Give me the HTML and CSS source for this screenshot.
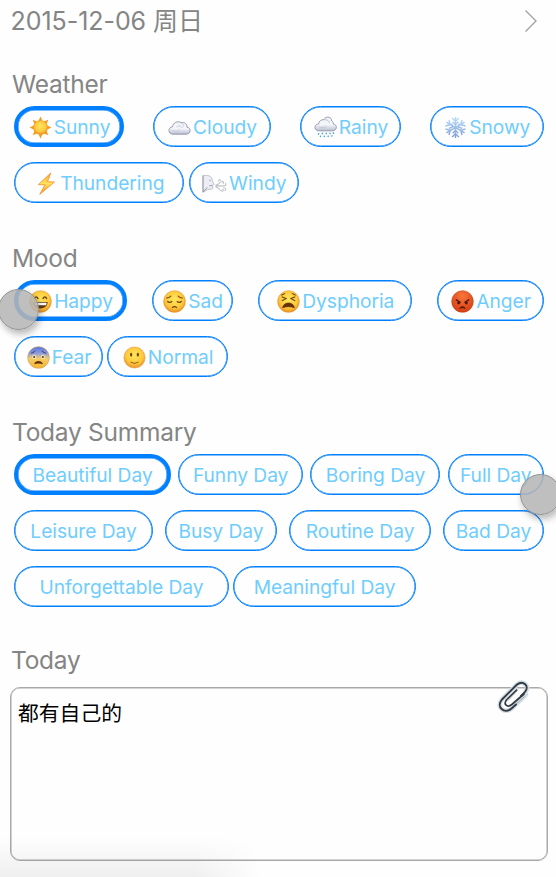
FILE: index.html
```html
<!DOCTYPE html>
<html lang="en">
<head>
<meta charset="utf-8">
<title>Diary</title>
<link rel="stylesheet" href="styles.css">
</head>
<body>
<svg class="defs" width="0" height="0" aria-hidden="true">
  <defs>
    <radialGradient id="face" cx=".5" cy=".4" r=".62"><stop offset="0" stop-color="#ffe75c"/><stop offset=".65" stop-color="#fdc83c"/><stop offset="1" stop-color="#e88a20"/></radialGradient>
    <radialGradient id="red" cx=".5" cy=".25" r=".75"><stop offset="0" stop-color="#f9763c"/><stop offset="1" stop-color="#d63c10"/></radialGradient>
    <linearGradient id="fear" x1="0" y1="0" x2="0" y2="1"><stop offset="0" stop-color="#5573dc"/><stop offset=".3" stop-color="#8b9de0"/><stop offset=".55" stop-color="#f3cc66"/><stop offset="1" stop-color="#f7b52c"/></linearGradient>
    <linearGradient id="cloud" x1="0" y1="0" x2="0" y2="1"><stop offset="0" stop-color="#f1f2f7"/><stop offset=".55" stop-color="#f5f6fa"/><stop offset="1" stop-color="#b8bccf"/></linearGradient>
    <linearGradient id="bolt" x1="0" y1="0" x2="0" y2="1"><stop offset="0" stop-color="#ff9c2e"/><stop offset=".5" stop-color="#ffe45a"/><stop offset="1" stop-color="#f98a24"/></linearGradient>
    <linearGradient id="ice" x1="0" y1="0" x2="0" y2="1"><stop offset="0" stop-color="#b9dcf8"/><stop offset="1" stop-color="#7f9fd8"/></linearGradient>
  </defs>
</svg>
<header class="topbar">
  <span class="date">2015-12-06 <span class="cjk">周日</span></span>
  <svg class="chevron" width="14" height="24" viewBox="0 0 14 24"><path d="M1.5 1.5 12 12 1.5 22.5"/></svg>
</header>
<main>
  <section class="group">
    <h2>Weather</h2>
    <div class="row spread">
      <button class="chip selected sunny"><svg class="emoji" viewBox="0 0 24 24"><path fill="#f79a1c" d="M12 .5 14 5h-4zM12 23.5l2-4.500h-4zM.5 12 5 10v4zM23.500 12 19 10v4zM3.900 3.900l4.600 1.800-2.800 2.800zM20.100 3.900l-1.800 4.600-2.800-2.800zM3.900 20.100l1.800-4.600 2.800 2.800zM20.100 20.100l-4.600-1.800 2.800-2.800z"/><circle cx="12" cy="12" r="7.300" fill="url(#face)" stroke="#ee9a24" stroke-width=".8"/></svg><span>Sunny</span></button>
      <button class="chip cloudy"><svg class="emoji" viewBox="0 0 24 24"><path d="M5.500 19C-.5 19-.3 11.700 4.700 11.300 5 7 10.500 4.500 13.500 7c4-1 6.800 1.500 6.200 4.600 4.800.8 4.500 7-.7 7.400z" fill="url(#cloud)" stroke="#8c90a4" stroke-width=".9"/><path d="M9 11.800c2-2.300 5-1.800 5.600.7M14 7.500c2 .7 2.600 2.200 2.200 3.600M4.500 14.500c3 2 6 1.700 8-.5" fill="none" stroke="#c4c7d5"/></svg><span>Cloudy</span></button>
      <button class="chip rainy"><svg class="emoji" viewBox="0 0 24 24"><path d="M5.500 15.500C-.5 15.500-.3 8.800 4.700 8.300 5 5 8 3.500 10.500 3.800c2-4.500 8.300-2.800 8 1.400 1.500.7 1.800 2 1.600 3.200 4.800.8 4.200 6.800-1.100 7.100z" fill="url(#cloud)" stroke="#8c90a4" stroke-width=".9"/><path d="M11 4c3-.5 5 1 5 3.500M5 11c3 2 6 1.500 8-.5" fill="none" stroke="#bfc3d1"/><path d="m5 18-.5 1.500M9 17.500 8.500 19M13 17.500l-.5 1.500M17 17.500l-.5 1.500M20.500 17l-.5 1.500M7 20.500 6.500 22M11 20.500l-.5 1.500M15 20.500l-.5 1.500M19 20l-.5 1.500" stroke="#4b9de0" stroke-width="1.400"/></svg><span>Rainy</span></button>
      <button class="chip snowy"><svg class="emoji" viewBox="0 0 24 24"><g fill="none" stroke="url(#ice)" stroke-width="1.500"><path d="M12.010 1 12 23M2.500 6.500l19 11M2.500 17.500l19-11"/><path d="m8.500 2 3.500 3.500L15.500 2M8.500 22l3.500-3.500 3.500 3.500M1.500 10.500l5-1.300-1.300-5M22.500 10.500l-5-1.300 1.300-5M1.500 13.500l5 1.300-1.300 5M22.500 13.500l-5 1.300 1.300 5M9 6l3 3 3-3M9 18l3-3 3 3M5 12.800l4-1-1-4M19 12.800l-4-1 1-4"/></g></svg><span>Snowy</span></button>
    </div>
    <div class="row">
      <button class="chip thundering"><svg class="emoji" viewBox="0 0 24 24"><path d="M16.500 1 3.500 13.200l7 .1L5 23.300 20.300 10.400l-7.300-.2z" fill="url(#bolt)" stroke="#f29432" stroke-width=".9"/></svg><span>Thundering</span></button>
      <button class="chip windy"><svg class="emoji wide" viewBox="0 0 26 24"><path d="M1 4c5-1 9.500 0 9.500 4.500L12.500 13l-1.500.8.2 3.700-5.200.8L1 21z" fill="#eceef4" stroke="#b9bbc5" stroke-width=".9"/><path d="M1 3.500V21l4.500-5M7.500 8.500 9 9M7.500 14.500l3-.5" fill="none" stroke="#8d90a0" stroke-width=".9"/><path d="M14 13.500c4 .5 4-3.500 7-3.500 2 0 2 2 .5 2M14 14.500h9c2.500 0 2.500-2.500 1-2.500M14 15.500c4 0 4 4.500 7 4.500 1.500 0 1.500-2 0-2M22 16.500c3-.5 3.500 2.500 1.500 3M17.500 10c-1-2 2-2.500 2-1" fill="none" stroke="#bfc1c8" stroke-width="1.100"/></svg><span>Windy</span></button>
    </div>
  </section>
  <section class="group">
    <h2>Mood</h2>
    <div class="row spread">
      <button class="chip selected happy"><svg class="emoji" viewBox="0 0 24 24"><circle cx="12" cy="12" r="11.300" fill="url(#face)" stroke="#e4922c" stroke-width=".6"/><path d="M5.500 9.500c.6-3 3.400-3 4 0M14.500 9.500c.6-3 3.400-3 4 0" fill="none" stroke="#65390d" stroke-width="1.400"/><path d="M4.500 12.500h15c-.3 9-14.700 9-15 0z" fill="#65390d"/><path d="M5.500 13.300h13l-.7 2.500H6.200z" fill="#fff"/></svg><span>Happy</span></button>
      <button class="chip sad"><svg class="emoji" viewBox="0 0 24 24"><circle cx="12" cy="12" r="11.300" fill="url(#face)" stroke="#e4922c" stroke-width=".6"/><path d="M3.500 8.500c2.500-.2 4-1 5-2.500M20.500 8.500c-2.500-.2-4-1-5-2.500M4.500 11.500c1.300 1.800 3.700 1.800 5 0M14.500 11.500c1.300 1.800 3.700 1.800 5 0M9.500 18.500c1.500-1.300 3.500-1.300 5 0" fill="none" stroke="#75430d" stroke-width="1.300"/></svg><span>Sad</span></button>
      <button class="chip dysphoria"><svg class="emoji" viewBox="0 0 24 24"><circle cx="12" cy="12" r="11.300" fill="url(#face)" stroke="#e4922c" stroke-width=".6"/><path d="M4.500 5.500 8.500 3.500M19.500 5.500l-4-2M5 7l4.500 2L5 11.200M19 7l-4.500 2 4.500 2.200" fill="none" stroke="#6b3c0c" stroke-width="1.100"/><path d="M6 18.500c.5-6.500 11.500-6.500 12 0-3-1.500-9-1.500-12 0z" fill="#65300a" stroke="#65300a" stroke-width=".8"/></svg><span>Dysphoria</span></button>
      <button class="chip anger"><svg class="emoji" viewBox="0 0 24 24"><circle cx="12" cy="12" r="11.300" fill="url(#red)" stroke="#bb4b20" stroke-width=".6"/><path d="m5 10 5 3M19 10l-5 3" stroke="#4b1706" stroke-width="1.400"/><circle cx="8" cy="13.500" r="1.500" fill="#4b1706"/><circle cx="16" cy="13.500" r="1.500" fill="#4b1706"/><path d="M9 19.200c1.300-2.400 4.700-2.400 6 0-1.500-.8-4.500-.8-6 0z" fill="#4b1706" stroke="#4b1706" stroke-width=".7"/></svg><span>Anger</span></button>
    </div>
    <div class="row">
      <button class="chip fear"><svg class="emoji" viewBox="0 0 24 24"><circle cx="12" cy="12" r="11.300" fill="url(#fear)" stroke="#c99a55" stroke-width=".6"/><path d="M4 7.500c2 0 3.500-1 4.500-2.500M20 7.500c-2 0-3.500-1-4.500-2.500" fill="none" stroke="#4a4a78" stroke-width="1.100"/><circle cx="7.500" cy="11.500" r="2.100" fill="#f8edcd"/><circle cx="16.500" cy="11.500" r="2.100" fill="#f8edcd"/><circle cx="7.500" cy="11.500" r="1.100" fill="#5d3512"/><circle cx="16.500" cy="11.500" r="1.100" fill="#5d3512"/><path d="M7.500 19c.7-4.500 8.300-4.500 9 0-2.500-1-6.500-1-9 0z" fill="#65300a"/></svg><span>Fear</span></button>
      <button class="chip normal"><svg class="emoji" viewBox="0 0 24 24"><circle cx="12" cy="12" r="11" fill="url(#face)" stroke="#e4922c" stroke-width=".6"/><ellipse cx="8.500" cy="9" rx="1.200" ry="2" fill="#75430d"/><ellipse cx="15.500" cy="9" rx="1.200" ry="2" fill="#75430d"/><path d="M8 16.500c2.500 1.800 5.500 1.800 8 0" fill="none" stroke="#8a5210" stroke-width="1.100"/></svg><span>Normal</span></button>
    </div>
  </section>
  <section class="group">
    <h2>Today Summary</h2>
    <div class="row spread">
      <button class="chip selected beautiful">Beautiful Day</button>
      <button class="chip funny">Funny Day</button>
      <button class="chip boring">Boring Day</button>
      <button class="chip full">Full Day</button>
    </div>
    <div class="row spread">
      <button class="chip leisure">Leisure Day</button>
      <button class="chip busy">Busy Day</button>
      <button class="chip routine">Routine Day</button>
      <button class="chip bad">Bad Day</button>
    </div>
    <div class="row">
      <button class="chip unforgettable">Unforgettable Day</button>
      <button class="chip meaningful">Meaningful Day</button>
    </div>
  </section>
  <section class="entry">
    <h2>Today</h2>
    <div class="note">都有自己的
      <svg class="clip" width="36" height="38" viewBox="0 0 36 38"><g fill="none" stroke-linecap="round" stroke-linejoin="round"><path d="M29 15.500 17 26.500M30 12C34 7 27 .8 21 5.500L6 20.500C-.5 28 8.500 35.500 15.500 29.500L30 15.500" stroke="#d3dfe5" stroke-width="4.600"/><path d="M28.500 17.500 17 28M22 11 12 21.500" stroke="#a4adb3" stroke-width="1"/><path d="M20.500 11 10.800 20.500c-4 5 .500 8.500 5 5L28 15" stroke="#343a43" stroke-width="1.700"/><path d="M20.500 25.500 29.500 13C34 7 27 .8 21 5.500L6 20.500C-.5 28 8.500 35.500 15.500 29.500L28 18" stroke="none"/><path d="M25 17 29 12.800C34 7 27 .8 21 5.500L6 20.500C-.5 28 8.500 35.500 15.500 29.500L20 25.500" stroke="#343a43" stroke-width="1.900"/></g></svg>
    </div>
  </section>
</main>
<i class="touch touch-left"></i>
<i class="touch touch-right"></i>
<i class="shade"></i>
</body>
</html>
```
FILE: styles.css
```css
* { box-sizing: border-box; }
body {
  position: relative;
  margin: 0;
  width: 556px;
  height: 877px;
  overflow: hidden;
  background: #fefefe;
  color: #858585;
  font-family: Inter, "Noto Sans CJK SC", sans-serif;
}
.defs { position: absolute; }
.topbar {
  display: flex;
  justify-content: space-between;
  align-items: flex-start;
  height: 69px;
  padding: 6px 18px 0 10.5px;
}
.date { font-size: 25px; line-height: 30px; letter-spacing: -.05px; white-space: pre; }
.cjk { font-family: "Noto Sans CJK SC", sans-serif; font-weight: 400; font-size: 25px; letter-spacing: 0; line-height: 1; }
.chevron { margin-top: 3px; fill: none; stroke: #a0a0a0; stroke-width: 1.3; }
h2 { margin: 0 0 7px 12px; font-size: 24.5px; line-height: 30px; font-weight: 400; letter-spacing: -.26px; }
.group { margin-bottom: 40px; }
.group:nth-of-type(3) { margin-bottom: 38px; }
.row { display: flex; gap: 4.5px; width: 529.5px; margin: 0 0 15px 14.3px; }
.row:last-child { margin-bottom: 0; }
.spread { justify-content: space-between; gap: 0; }
.chip {
  display: flex;
  justify-content: center;
  align-items: center;
  gap: 2px;
  height: 41px;
  flex: none;
  padding: 1px 0 0;
  border: 1px solid #007fff;
  border-radius: 21px;
  background: transparent;
  box-shadow: inset 0 0 0 .5px #007fff;
  color: #6fcdff;
  font: 400 19.2px/24px Inter, sans-serif;
  letter-spacing: -.03px;
  white-space: nowrap;
}
.selected { border-width: 4px; }
.emoji { width: 23px; height: 23px; flex: none; }
.emoji.wide { width: 25px; }
.chip span { margin-right: -1px; }
.sunny { width: 109.5px; }
.cloudy { width: 118.5px; }
.rainy { width: 100.5px; }
.snowy { width: 114px; }
.thundering { width: 170px; }
.windy { width: 110px; }
.happy { width: 112.5px; }
.sad { width: 81.5px; }
.dysphoria { width: 154px; }
.anger { width: 106.5px; }
.fear { width: 88.5px; }
.normal { width: 120.5px; }
.beautiful { width: 156.5px; }
.funny { width: 125px; }
.boring { width: 130px; }
.full { width: 96px; }
.leisure { width: 138.5px; }
.busy { width: 112px; }
.routine { width: 142px; }
.bad { width: 100.5px; }
.unforgettable { width: 214.5px; }
.meaningful { width: 182.5px; }
.entry h2 { margin: 0 0 12px 11px; }
.note {
  position: relative;
  width: 538px;
  height: 174px;
  margin-left: 10px;
  padding: 9px 7px;
  border: 1px solid #a9a9a9;
  border-radius: 10px;
  box-shadow: inset 0 0 0 .5px #a9a9a9;
  color: #000;
  font: 400 20.8px/30px "Noto Sans CJK SC", sans-serif;
}
.clip { position: absolute; right: 15px; top: -9px; }
.touch {
  position: absolute;
  width: 41px;
  height: 41px;
  border: 1px solid #929292;
  border-radius: 50%;
  background: rgba(180, 180, 180, .86);
  box-shadow: 2px 4px 7px rgba(0, 0, 0, .28);
}
.touch-left { left: -2px; top: 289px; }
.touch-right { left: 519.5px; top: 473.5px; }
.shade {
  position: absolute;
  left: 0;
  bottom: 0;
  width: 260px;
  height: 40px;
  background: linear-gradient(transparent, rgba(0, 0, 0, .06));
  -webkit-mask-image: linear-gradient(90deg, #000 75%, transparent);
  mask-image: linear-gradient(90deg, #000 75%, transparent);
}
```
